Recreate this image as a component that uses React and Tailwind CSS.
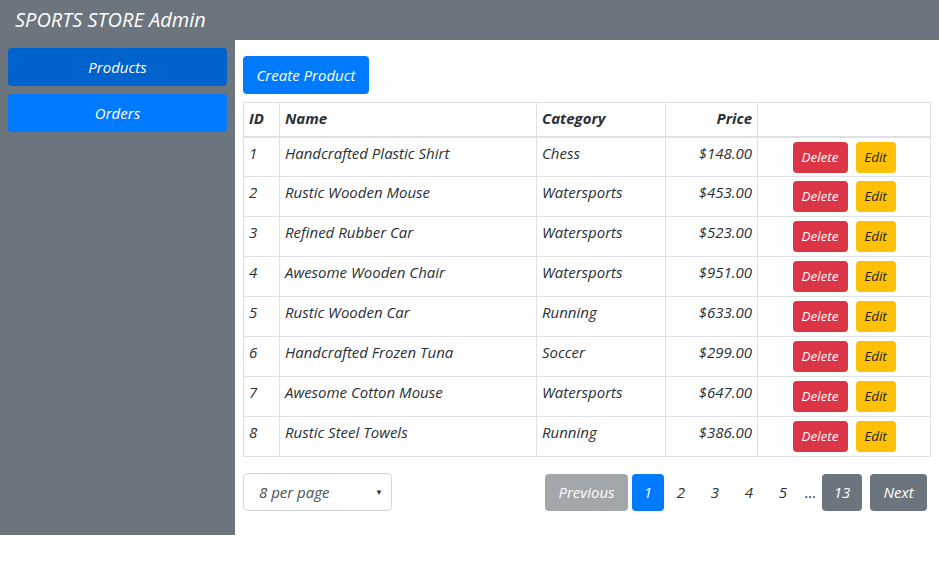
import React from 'react';

const products = [
  [1, 'Handcrafted Plastic Shirt', 'Chess', '$148.00'],
  [2, 'Rustic Wooden Mouse', 'Watersports', '$453.00'],
  [3, 'Refined Rubber Car', 'Watersports', '$523.00'],
  [4, 'Awesome Wooden Chair', 'Watersports', '$951.00'],
  [5, 'Rustic Wooden Car', 'Running', '$633.00'],
  [6, 'Handcrafted Frozen Tuna', 'Soccer', '$299.00'],
  [7, 'Awesome Cotton Mouse', 'Watersports', '$647.00'],
  [8, 'Rustic Steel Towels', 'Running', '$386.00'],
];

export default function App() {
  return (
    <div className="w-[939px] italic text-[#2b3035] text-[15px]" style={{ fontFamily: '"Open Sans", "Noto Sans", sans-serif' }}>
      <div className="h-10 bg-[#6c757d] text-white text-[20px] px-[15px] flex items-center">
        SPORTS STORE Admin
      </div>
      <div className="flex">
        <div className="w-[235px] bg-[#6c757d] p-2 flex flex-col gap-2">
          <button className="h-[38px] rounded bg-[#0062cc] text-white italic">Products</button>
          <button className="h-[38px] rounded bg-[#007bff] text-white italic">Orders</button>
        </div>
        <div className="flex-1 pl-2 pr-2 pt-4 pb-6">
          <button className="h-[38px] w-[126px] rounded bg-[#007bff] text-white italic">Create Product</button>
          <table className="mt-2 w-[688px] border-collapse border border-[#dee2e6]">
            <thead>
              <tr className="h-[34px] border-b-2 border-[#dee2e6] font-semibold">
                <th className="w-9 px-[5px] pb-[2px] text-left border border-[#dee2e6]">ID</th>
                <th className="w-[257px] px-[5px] pb-[2px] text-left border border-[#dee2e6]">Name</th>
                <th className="w-[129px] px-[5px] pb-[2px] text-left border border-[#dee2e6]">Category</th>
                <th className="w-[92px] px-[5px] pb-[2px] text-right border border-[#dee2e6]">Price</th>
                <th className="border border-[#dee2e6]"></th>
              </tr>
            </thead>
            <tbody>
              {products.map(([id, name, cat, price]) => (
                <tr key={id} className="h-10">
                  <td className="px-[5px] pt-[3px] align-top leading-6 border border-[#dee2e6]">{id}</td>
                  <td className="px-[5px] pt-[3px] align-top leading-6 border border-[#dee2e6]">{name}</td>
                  <td className="px-[5px] pt-[3px] align-top leading-6 border border-[#dee2e6]">{cat}</td>
                  <td className="px-[5px] pt-[3px] align-top leading-6 text-right border border-[#dee2e6]">{price}</td>
                  <td className="pt-[4px] pb-[3px] align-top border border-[#dee2e6]">
                    <div className="flex justify-center gap-2">
                      <button className="h-[31px] w-[55px] rounded bg-[#dc3545] text-white text-[13.5px] italic">Delete</button>
                      <button className="h-[31px] w-10 rounded bg-[#ffc107] text-[#212529] text-[13.5px] italic">Edit</button>
                    </div>
                  </td>
                </tr>
              ))}
            </tbody>
          </table>
          <div className="mt-4 flex items-center justify-between w-[684px]">
            <div className="relative w-[149px] h-[38px] border border-[#ced4da] rounded flex items-center pl-[15px] text-[#495057]">
              8 per page
              <span className="absolute right-[8px] top-[12px] text-[8px] not-italic text-[#343a40]">▼</span>
            </div>
            <div className="flex items-center">
              <button className="h-[37px] w-[83px] rounded bg-[#a2a7ab] text-white italic">Previous</button>
              <button className="ml-1 h-[37px] w-8 rounded bg-[#007bff] text-white italic">1</button>
              <button className="h-[37px] w-[34px] italic">2</button>
              <button className="h-[37px] w-[34px] italic">3</button>
              <button className="h-[37px] w-[34px] italic">4</button>
              <button className="h-[37px] w-[34px] italic">5</button>
              <span className="w-[20px] text-center not-italic">…</span>
              <button className="ml-[2px] h-[37px] w-10 rounded bg-[#6c757d] text-white italic">13</button>
              <button className="ml-2 h-[37px] w-[57px] rounded bg-[#6c757d] text-white italic">Next</button>
            </div>
          </div>
        </div>
      </div>
    </div>
  );
}
